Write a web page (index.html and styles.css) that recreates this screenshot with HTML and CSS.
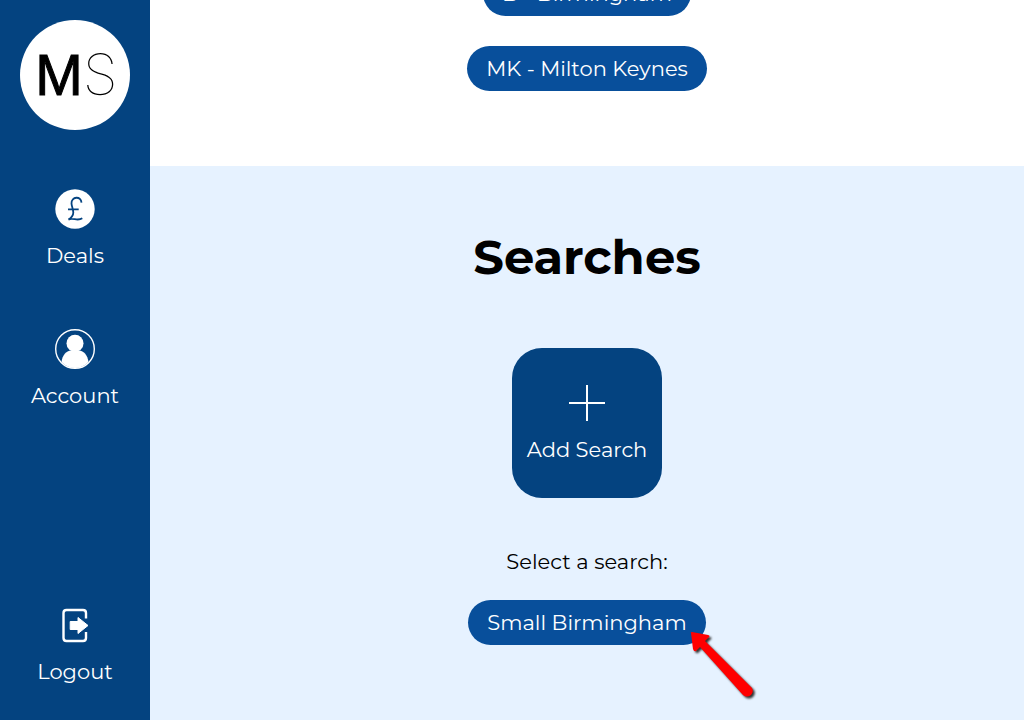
FILE: index.html
```html
<!DOCTYPE html>
<html lang="en">
<head>
<meta charset="utf-8">
<title>Searches</title>
<link rel="stylesheet" href="styles.css">
</head>
<body>
<div class="app">
  <nav class="sidebar">
    <a class="logo" href="#"><span class="logo-bold">M</span><span class="logo-thin">S</span></a>
    <a class="nav-item" href="#">
      <svg class="icon" viewBox="0 0 40 40" aria-hidden="true">
        <circle cx="20" cy="20" r="19.7" fill="#fff"/>
        <path d="M26.5 13.6C26 6.5 16.3 7.5 16.5 14.5C16.6 17.5 18.3 20 18.3 23.5C18.3 27.5 15.5 29.3 13.4 30.6C18 28 22 32.7 27.3 29.3M13 20.4H23.7" fill="none" stroke="#044380" stroke-width="1.8"/>
      </svg>
      <span>Deals</span>
    </a>
    <a class="nav-item" href="#">
      <svg class="icon" viewBox="0 0 40 40" aria-hidden="true">
        <circle cx="20" cy="20" r="19.3" fill="none" stroke="#fff" stroke-width="1.4"/>
        <circle cx="20" cy="14.3" r="8.5" fill="#fff"/>
        <path d="M6.5 33C7.5 26 11 22.3 16.2 21.3H23.8C29 22.3 32.5 26 33.5 33C26 41 14 41 6.5 33Z" fill="#fff"/>
      </svg>
      <span>Account</span>
    </a>
    <a class="nav-item logout" href="#">
      <svg class="icon" viewBox="0 0 40 40" aria-hidden="true">
        <path d="M31 13.5V8Q31 5 28 5H11.5Q8.500 5 8.500 8V33Q8.500 36 11.500 36H28Q31 36 31 33V27" fill="none" stroke="#fff" stroke-width="2.4"/>
        <path d="M15.2 16.5H23V12.5L33 20.5L23 28.5V24.5H15.2Z" fill="#fff" stroke="#fff" stroke-width="1" stroke-linejoin="round"/>
      </svg>
      <span>Logout</span>
    </a>
  </nav>
  <main class="content">
    <section class="areas">
      <button class="pill" type="button">B - Birmingham</button>
      <button class="pill" type="button">MK - Milton Keynes</button>
    </section>
    <section class="searches">
      <h1>Searches</h1>
      <button class="add" type="button">
        <svg class="plus" viewBox="0 0 36 36" aria-hidden="true"><path d="M0 18H36M18 0V36" stroke="#fff" stroke-width="2"/></svg>
        <span>Add Search</span>
      </button>
      <p class="prompt">Select a search:</p>
      <div class="result">
        <button class="pill" type="button">Small Birmingham</button>
        <svg class="pointer" viewBox="0 0 72 72" aria-hidden="true">
          <path d="M4 4Q3 3 5 3L21 6Q24 7 21 9L18 12L65 59Q67 63 64 66Q60 69 56 66L13 18L9 22Q7 23 6 20Z" fill="#f00"/>
        </svg>
      </div>
    </section>
  </main>
</div>
</body>
</html>
```
FILE: styles.css
```css
* { box-sizing: border-box; }

body {
  margin: 0;
  font-family: Montserrat, Inter, sans-serif;
  font-size: 21px;
  line-height: 26px;
  color: #000;
}

.app { display: flex; height: 100vh; overflow: hidden; }

.sidebar {
  flex: 0 0 150px;
  display: flex;
  flex-direction: column;
  align-items: center;
  padding: 20px 0 35px;
  background: #044380;
}

.logo {
  display: flex;
  align-items: center;
  justify-content: center;
  flex: 0 0 110px;
  width: 110px;
  margin-bottom: 59px;
  padding-left: 3px;
  border-radius: 50%;
  background: #fff;
  color: #000;
  font-size: 57px;
  line-height: 60px;
  text-decoration: none;
}
.logo-bold {
  font-family: "Liberation Sans", sans-serif;
  -webkit-text-stroke: 1px #000;
}
.logo-thin { font-family: Inter, sans-serif; font-weight: 100; }

.nav-item {
  display: flex;
  flex-direction: column;
  align-items: center;
  gap: 14px;
  margin-bottom: 60px;
  color: #fff;
  text-decoration: none;
}
.logout { margin-top: auto; margin-bottom: 0; }
.icon { width: 40px; height: 40px; }

/* The list starts above the visible area, as when scrolled. */
.content {
  flex: 1;
  display: flex;
  flex-direction: column;
  margin-top: -29px;
}

.areas {
  display: flex;
  flex-direction: column;
  align-items: center;
  gap: 30px;
  padding-bottom: 75px;
  background: #fff;
}

.pill {
  flex: none;
  height: 45px;
  padding: 0 19px;
  border: 0;
  border-radius: 23px;
  background: #084f9b;
  color: #fff;
  font: inherit;
}

.searches {
  flex: 1;
  display: flex;
  flex-direction: column;
  align-items: center;
  padding-top: 61px;
  background: #e6f2ff;
}

h1 {
  margin: 0 0 61px;
  font-size: 48px;
  line-height: 60px;
  font-weight: 700;
}

.add {
  display: flex;
  flex-direction: column;
  align-items: center;
  justify-content: center;
  gap: 16px;
  width: 150px;
  height: 150px;
  padding: 2px 0 0;
  border: 0;
  border-radius: 30px;
  background: #044380;
  color: #fff;
  font: inherit;
}
.plus { width: 36px; height: 36px; }

.prompt { margin: 51px 0 25px; }

.result { position: relative; }
.pointer {
  position: absolute;
  right: -53px;
  top: 29px;
  width: 72px;
  height: 72px;
  filter: drop-shadow(2px 2px 1px #333);
}
```
